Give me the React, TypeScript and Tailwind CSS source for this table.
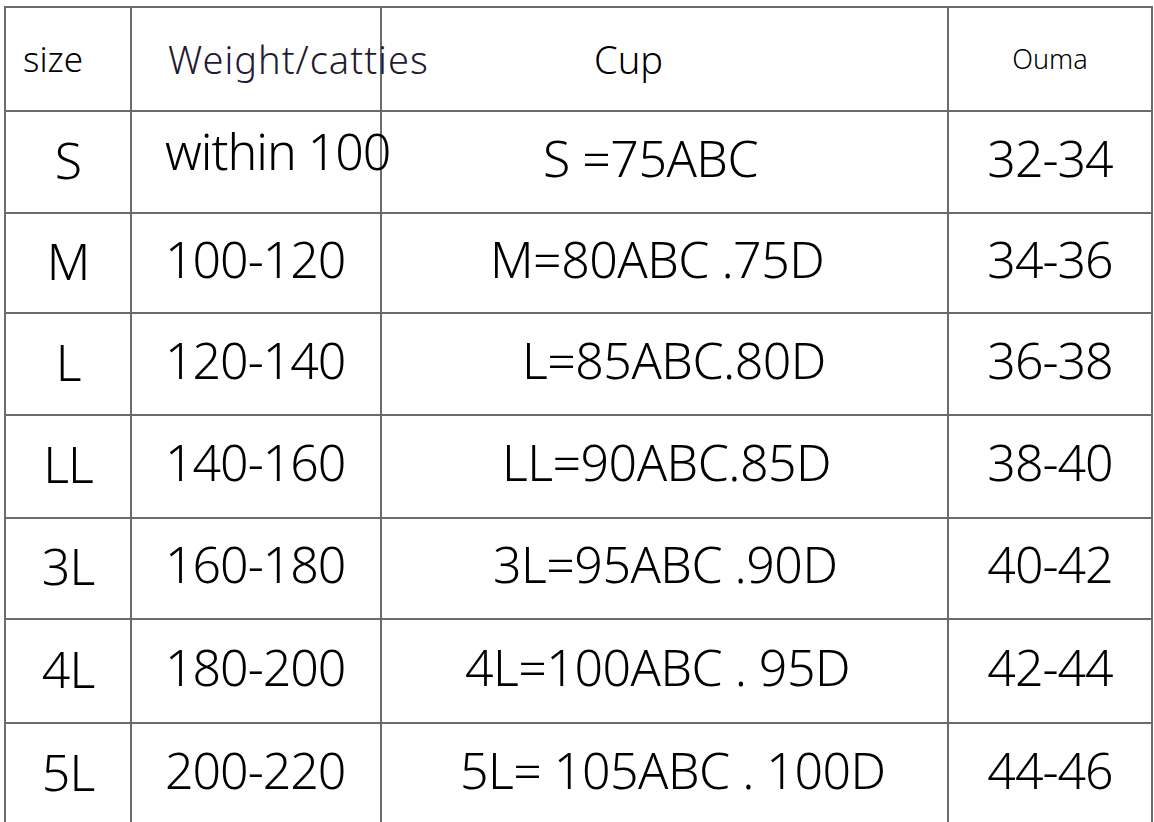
import React from 'react';

type Row = {
  size: string;
  weight: string;
  cup: string;
  ouma: string;
  h: string;
  cupPad: string;
  lift: string;
};

const ROWS: Row[] = [
  { size: 'S', weight: 'within 100', cup: 'S =75ABC', ouma: '32-34', h: 'h-[102px]', cupPad: 'pl-[161px]', lift: 'pb-[22px]' },
  { size: 'M', weight: '100-120', cup: 'M=80ABC .75D', ouma: '34-36', h: 'h-[100px]', cupPad: 'pl-[108px]', lift: 'pb-[8px]' },
  { size: 'L', weight: '120-140', cup: 'L=85ABC.80D', ouma: '36-38', h: 'h-[102px]', cupPad: 'pl-[140px]', lift: 'pb-[8px]' },
  { size: 'LL', weight: '140-160', cup: 'LL=90ABC.85D', ouma: '38-40', h: 'h-[103px]', cupPad: 'pl-[120px]', lift: 'pb-[8px]' },
  { size: '3L', weight: '160-180', cup: '3L=95ABC .90D', ouma: '40-42', h: 'h-[101px]', cupPad: 'pl-[111px]', lift: 'pb-[8px]' },
  { size: '4L', weight: '180-200', cup: '4L=100ABC . 95D', ouma: '42-44', h: 'h-[104px]', cupPad: 'pl-[83px]', lift: 'pb-[8px]' },
  { size: '5L', weight: '200-220', cup: '5L= 105ABC . 100D', ouma: '44-46', h: 'h-[103px]', cupPad: 'pl-[78px]', lift: 'pb-[8px]' },
];

const cell = 'flex items-center border-r-2 border-b-2 border-[#6b6b6b] overflow-visible whitespace-pre';

export default function App() {
  return (
    <div className="min-h-screen bg-white pt-[6px] pl-[4px] font-['Noto_Sans',sans-serif] font-light text-black">
      <div className="grid w-[1149px] grid-cols-[126px_250px_567px_204px] border-l-2 border-t-2 border-[#6b6b6b]">
        {/* header */}
        <div className={`${cell} h-[104px] pl-[17px] text-[35px]`}>size</div>
        <div className={`${cell} h-[104px] pl-[36px] text-[38px] tracking-[1px] text-[#24192f] relative z-10`}>Weight/catties</div>
        <div className={`${cell} h-[104px] pl-[212px] text-[38px]`}>Cup</div>
        <div className={`${cell} h-[104px] justify-center text-[27px]`}>Ouma</div>

        {ROWS.map(r => (
          <React.Fragment key={r.size}>
            <div className={`${cell} ${r.h} justify-center pb-[4px] text-[50px] tracking-[-1px]`}>{r.size}</div>
            <div className={`${cell} ${r.h} ${r.lift} pl-[33px] text-[50px] tracking-[-1px] relative z-10`}>{r.weight}</div>
            <div className={`${cell} ${r.h} ${r.cupPad} pb-[8px] text-[50px] tracking-[-0.5px]`}>{r.cup}</div>
            <div className={`${cell} ${r.h} justify-center pb-[8px] text-[50px] tracking-[-1px]`}>{r.ouma}</div>
          </React.Fragment>
        ))}
      </div>
    </div>
  );
}
